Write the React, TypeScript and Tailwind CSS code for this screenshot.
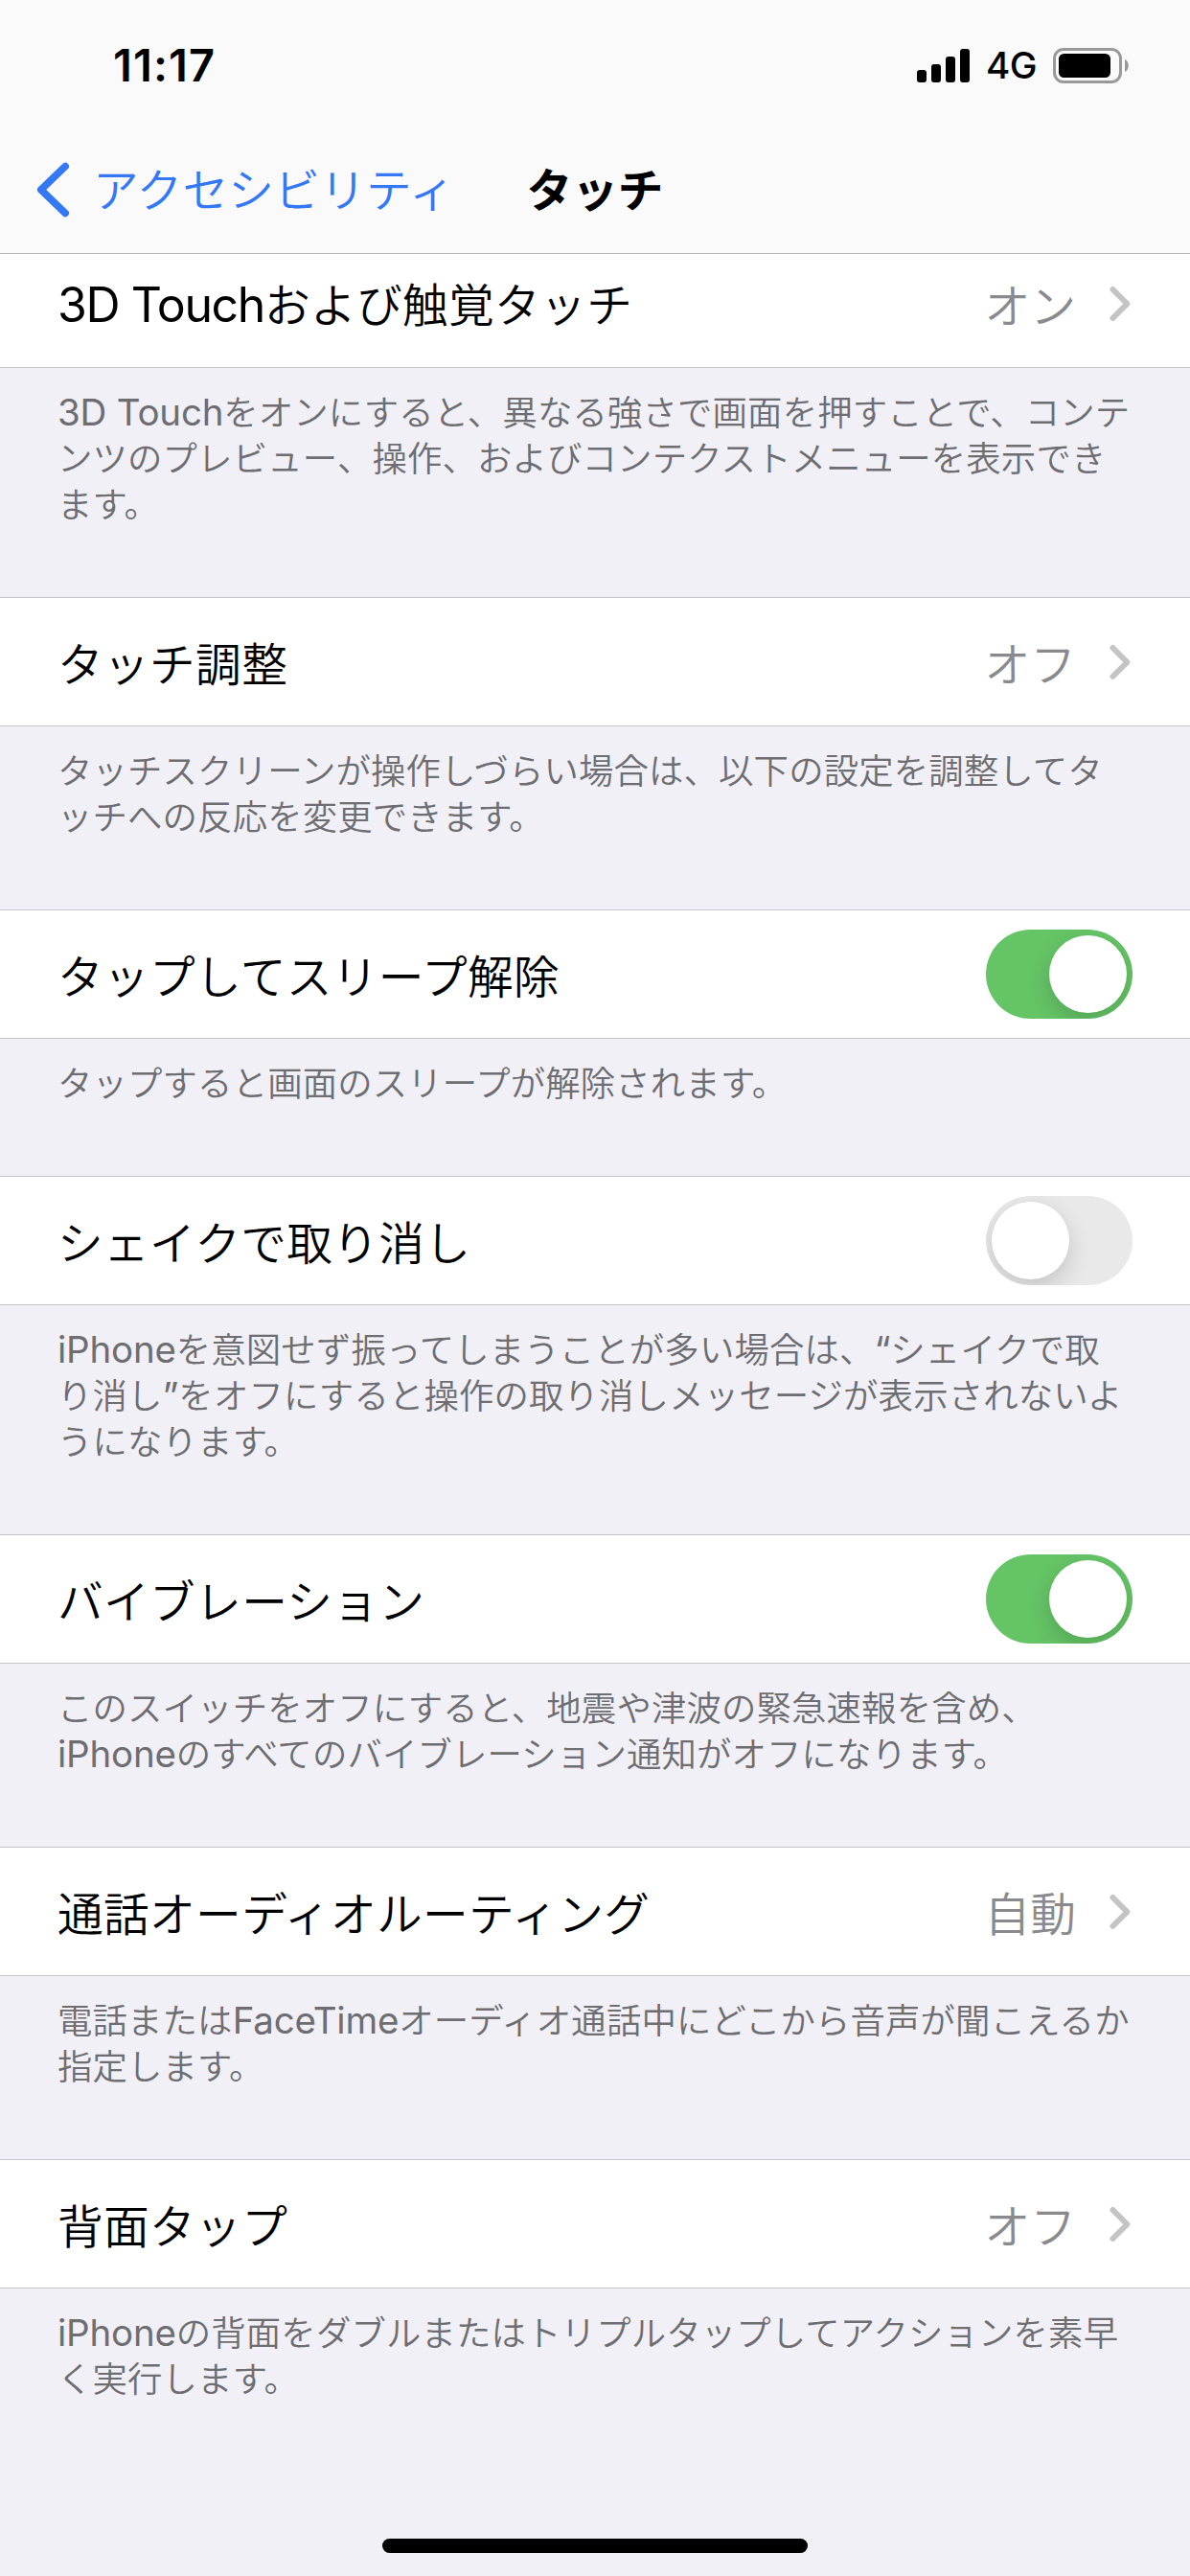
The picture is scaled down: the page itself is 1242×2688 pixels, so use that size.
import React from "react";

type Item = {
  label: React.ReactNode;
  value?: string;
  on?: boolean;
  notes: React.ReactNode[];
  footer: string;
};

const Lt = ({ children }: { children: React.ReactNode }) => (
  <span className="font-['Inter'] text-[50px] font-normal tracking-[-1.4px]">{children}</span>
);
const Ls = ({ children }: { children: React.ReactNode }) => (
  <span className="font-['Inter'] text-[38.5px] font-normal tracking-[-0.2px]">{children}</span>
);

const items: Item[] = [
  {
    label: <><Lt>3D Touch</Lt>および触覚タッチ</>,
    value: "オン",
    notes: [
      <><Ls>3D Touch</Ls>をオンにすると、異なる強さで画面を押すことで、コンテ</>,
      "ンツのプレビュー、操作、およびコンテクストメニューを表示でき",
      "ます。",
    ],
    footer: "h-[239px]",
  },
  {
    label: "タッチ調整",
    value: "オフ",
    notes: ["タッチスクリーンが操作しづらい場合は、以下の設定を調整してタ", "ッチへの反応を変更できます。"],
    footer: "h-[191px]",
  },
  {
    label: "タップしてスリープ解除",
    on: true,
    notes: ["タップすると画面のスリープが解除されます。"],
    footer: "h-[143px]",
  },
  {
    label: "シェイクで取り消し",
    on: false,
    notes: [
      <><Ls>iPhone</Ls>を意図せず振ってしまうことが多い場合は、<Ls>“</Ls>シェイクで取</>,
      <>り消し<Ls>”</Ls>をオフにすると操作の取り消しメッセージが表示されないよ</>,
      "うになります。",
    ],
    footer: "h-[239px]",
  },
  {
    label: "バイブレーション",
    on: true,
    notes: [
      "このスイッチをオフにすると、地震や津波の緊急速報を含め、",
      <><Ls>iPhone</Ls>のすべてのバイブレーション通知がオフになります。</>,
    ],
    footer: "h-[191px]",
  },
  {
    label: "通話オーディオルーティング",
    value: "自動",
    notes: [
      <>電話または<Ls>FaceTime</Ls>オーディオ通話中にどこから音声が聞こえるか</>,
      "指定します。",
    ],
    footer: "h-[191px]",
  },
  {
    label: "背面タップ",
    value: "オフ",
    notes: [
      <><Ls>iPhone</Ls>の背面をダブルまたはトリプルタップしてアクションを素早</>,
      "く実行します。",
    ],
    footer: "h-[191px]",
  },
];

function Toggle({ on }: { on: boolean }) {
  return (
    <div
      className={
        on
          ? "flex h-[93px] w-[153px] items-center justify-end overflow-hidden rounded-full bg-[#65c466] px-[6px]"
          : "flex h-[93px] w-[153px] items-center justify-start overflow-hidden rounded-full bg-[#e9e9ea] px-[6px]"
      }
    >
      <div className="size-[81px] rounded-full bg-white shadow-[0_9px_24px_rgba(0,0,0,0.16)]" />
    </div>
  );
}

function Row({ item }: { item: Item }) {
  return (
    <div className="flex h-[135px] shrink-0 items-center justify-between border-y border-[#c6c6c8] bg-white pr-[60px] pl-[60px]">
      <span className="whitespace-nowrap text-[47.7px] leading-[60px] tracking-[0.35px] text-black">{item.label}</span>
      {item.value !== undefined ? (
        <div className="flex items-center">
          <span className="text-[47.7px] leading-[60px] text-[#8a8a8e]">{item.value}</span>
          <svg className="ml-[34px] h-[38px] w-[25px]" viewBox="0 0 25 38" fill="none">
            <path d="M4.4 4 19.4 19 4.4 34" stroke="#c4c4c6" strokeWidth="6" strokeLinecap="round" strokeLinejoin="round" />
          </svg>
        </div>
      ) : (
        <Toggle on={!!item.on} />
      )}
    </div>
  );
}

function StatusBar() {
  return (
    <div className="flex h-[132px] items-start justify-between pr-[62px] pl-[118px]">
      <span className="mt-[38px] font-['Inter'] text-[47px] leading-[60px] font-semibold tracking-[1.1px]">11:17</span>
      <div className="mt-[49px] flex h-[38px] items-center">
        <div className="flex h-[36px] items-end gap-[5px]">
          <div className="h-[13px] w-[10px] rounded-[3px] bg-black" />
          <div className="h-[19px] w-[10px] rounded-[3px] bg-black" />
          <div className="h-[27px] w-[10px] rounded-[3px] bg-black" />
          <div className="h-[35px] w-[10px] rounded-[3px] bg-black" />
        </div>
        <span className="ml-[17px] w-[70px] font-['Inter'] text-[38.5px] leading-[38px] font-[450] tracking-[-0.5px] whitespace-nowrap">4G</span>
        <svg className="h-[37px] w-[81px]" viewBox="0 0 81 37" fill="none">
          <rect x="1.5" y="1.5" width="69" height="34" rx="9.5" stroke="#999" strokeWidth="3" />
          <rect x="6" y="6" width="54" height="25" rx="5.5" fill="#000" />
          <path d="M75 12c5 2 5 11 0 13Z" fill="#999" />
        </svg>
      </div>
    </div>
  );
}

export default function App() {
  return (
    <div
      lang="ja"
      className="flex h-[2688px] w-[1242px] flex-col overflow-hidden bg-[#f1f0f6] font-['Noto_Sans_CJK_JP',sans-serif] font-[350] text-black"
    >
      <header className="h-[265px] shrink-0 border-b border-[#b2b2b3] bg-[#fafafa]">
        <StatusBar />
        <nav className="grid h-[132px] grid-cols-[1fr_auto_1fr] items-center">
          <div className="flex items-center pl-[37px] text-[#3478f6]">
            <svg className="h-[58px] w-[36px] shrink-0" viewBox="0 0 36 58" fill="none">
              <path d="M31.2 4.6 5.8 29 31.2 53.4" stroke="currentColor" strokeWidth="7.6" strokeLinecap="round" strokeLinejoin="round" />
            </svg>
            <span className="ml-[24px] pb-[5px] text-[47.7px] leading-[60px] tracking-[0.2px] whitespace-nowrap">アクセシビリティ</span>
          </div>
          <h1 className="pb-[5px] text-[47.7px] leading-[60px] font-bold">タッチ</h1>
          <div />
        </nav>
      </header>
      <main className="flex flex-col">
        {items.map((item, i) => (
          <section key={i} className="flex flex-col">
            <div className={i === 0 ? "flex h-[119px] flex-col justify-end overflow-hidden" : "flex flex-col"}>
              <Row item={item} />
            </div>
            <div className={`${item.footer} pt-[20px] pl-[60px]`}>
              {item.notes.map((line, j) => (
                <p key={j} className="h-[48px] text-[36.4px] leading-[48px] tracking-[0.14px] whitespace-nowrap text-[#6d6d72]">
                  {line}
                </p>
              ))}
            </div>
          </section>
        ))}
      </main>
      <div className="mt-auto mb-[24px] h-[15px] w-[444px] shrink-0 self-center rounded-full bg-black" />
    </div>
  );
}
